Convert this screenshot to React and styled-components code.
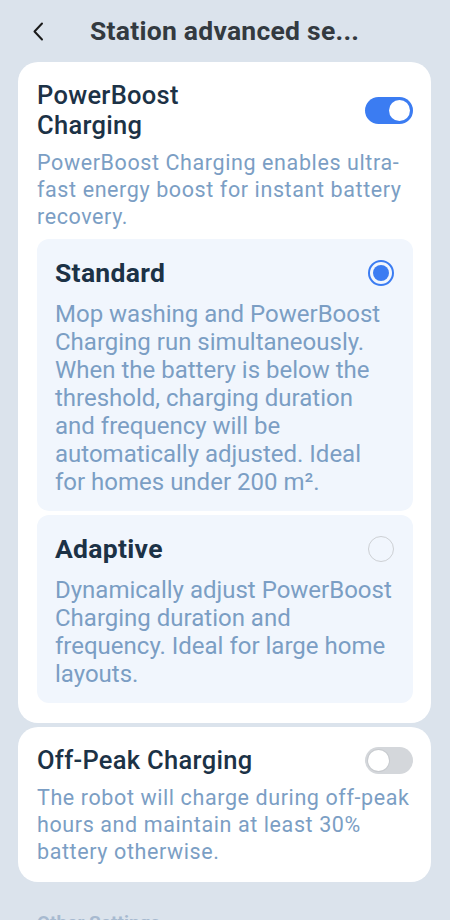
import React, { useState } from "react";
import styled, { createGlobalStyle } from "styled-components";

const Global = createGlobalStyle`
  html, body { margin: 0; padding: 0; background: #dbe3ec; }
  body { font-family: Roboto, "Noto Sans", sans-serif; -webkit-font-smoothing: antialiased; }
  * { box-sizing: border-box; }
`;

const Page = styled.div`
  width: 450px;
  height: 920px;
  overflow: hidden;
  background: #dbe3ec;
  display: flex;
  flex-direction: column;
  padding: 0 19px 0 18px;
`;

const Header = styled.div`
  flex: none;
  height: 62px;
  display: flex;
  align-items: center;
  padding-left: 14px;
`;

const BackBtn = styled.button`
  border: none;
  background: none;
  padding: 0;
  width: 12px;
  height: 20px;
  display: flex;
  align-items: center;
  justify-content: center;
  cursor: pointer;
`;

const HeaderTitle = styled.h1`
  margin: 0 0 0 46px;
  font-size: 26.5px;
  font-weight: 700;
  line-height: 32px;
  letter-spacing: 0.25px;
  color: #333a40;
  white-space: nowrap;
`;

const Card = styled.section`
  flex: none;
  background: #ffffff;
  border-radius: 20px;
  padding: 18px 18px ${(p) => p.$pb}px 19px;
  margin-bottom: 4px;
  display: flex;
  flex-direction: column;
`;

const Row = styled.div`
  display: flex;
  align-items: center;
  justify-content: space-between;
`;

const CardTitle = styled.h2`
  margin: 0;
  font-size: 25.5px;
  font-weight: 500;
  line-height: 30px;
  letter-spacing: 0.3px;
  color: #1c3246;
  max-width: ${(p) => p.$max || "none"};
`;

const Desc = styled.p`
  margin: ${(p) => p.$mt}px 0 0;
  font-size: 21.5px;
  line-height: 27px;
  letter-spacing: 0.6px;
  color: #7b9ec4;
`;

const Toggle = styled.button`
  width: 48px;
  height: 27px;
  border-radius: 14px;
  border: none;
  padding: 0;
  flex: none;
  position: relative;
  background: ${(p) => (p.$on ? "#3b7cf2" : "#d4d7db")};
  cursor: pointer;
  &::after {
    content: "";
    position: absolute;
    top: 3px;
    left: ${(p) => (p.$on ? "24px" : "3px")};
    width: 21px;
    height: 21px;
    border-radius: 50%;
    background: #fff;
    box-shadow: ${(p) => (p.$on ? "none" : "0 0 0 1px #c8cbcf")};
  }
`;

const Options = styled.div`
  margin-top: 9px;
  display: flex;
  flex-direction: column;
  gap: 4px;
`;

const Option = styled.div`
  background: #f1f6fd;
  border-radius: 12px;
  padding: 19px 19px 15px 18px;
  cursor: pointer;
`;

const OptionTitle = styled.h3`
  margin: 0;
  font-size: 26.5px;
  font-weight: 700;
  line-height: 30px;
  letter-spacing: 0.3px;
  color: #1c3246;
`;

const OptionDesc = styled.p`
  margin: 12px 0 0;
  font-size: 24px;
  line-height: 28px;
  color: #7b9ec4;
`;

const Radio = styled.span`
  width: 26px;
  height: 26px;
  border-radius: 50%;
  flex: none;
  border: ${(p) => (p.$on ? "2px solid #3b7cf2" : "1.5px solid #cdd0d4")};
  display: flex;
  align-items: center;
  justify-content: center;
  &::after {
    content: "";
    width: 16px;
    height: 16px;
    border-radius: 50%;
    background: ${(p) => (p.$on ? "#3b7cf2" : "transparent")};
  }
`;

const SectionLabel = styled.div`
  flex: none;
  margin: 25px 0 0 19px;
  font-size: 19px;
  font-weight: 700;
  line-height: 24px;
  color: #a7bad0;
`;

export default function App() {
  const [boost, setBoost] = useState(true);
  const [offPeak, setOffPeak] = useState(false);
  const [mode, setMode] = useState("standard");

  const options = [
    {
      id: "standard",
      title: "Standard",
      desc: "Mop washing and PowerBoost Charging run simultaneously. When the battery is below the threshold, charging duration and frequency will be automatically adjusted. Ideal for homes under 200 m².",
    },
    {
      id: "adaptive",
      title: "Adaptive",
      desc: "Dynamically adjust PowerBoost Charging duration and frequency. Ideal for large home layouts.",
    },
  ];

  return (
    <Page>
      <Global />
      <Header>
        <BackBtn aria-label="Back">
          <svg width="12" height="19" viewBox="0 0 12 19" fill="none">
            <path d="M10 1.5L2.5 9.5L10 17.5" stroke="#1a1a1a" strokeWidth="2" strokeLinecap="round" strokeLinejoin="round" />
          </svg>
        </BackBtn>
        <HeaderTitle>Station advanced se...</HeaderTitle>
      </Header>

      <Card $pb={20}>
        <Row>
          <CardTitle $max="200px">PowerBoost Charging</CardTitle>
          <Toggle $on={boost} onClick={() => setBoost(!boost)} aria-label="PowerBoost Charging" />
        </Row>
        <Desc $mt={9}>PowerBoost Charging enables ultra-fast energy boost for instant battery recovery.</Desc>
        <Options>
          {options.map((o) => (
            <Option key={o.id} onClick={() => setMode(o.id)}>
              <Row>
                <OptionTitle>{o.title}</OptionTitle>
                <Radio $on={mode === o.id} />
              </Row>
              <OptionDesc>{o.desc}</OptionDesc>
            </Option>
          ))}
        </Options>
      </Card>

      <Card $pb={17}>
        <Row>
          <CardTitle>Off-Peak Charging</CardTitle>
          <Toggle $on={offPeak} onClick={() => setOffPeak(!offPeak)} aria-label="Off-Peak Charging" />
        </Row>
        <Desc $mt={9}>The robot will charge during off-peak hours and maintain at least 30% battery otherwise.</Desc>
      </Card>

      <SectionLabel>Other Settings</SectionLabel>
    </Page>
  );
}
